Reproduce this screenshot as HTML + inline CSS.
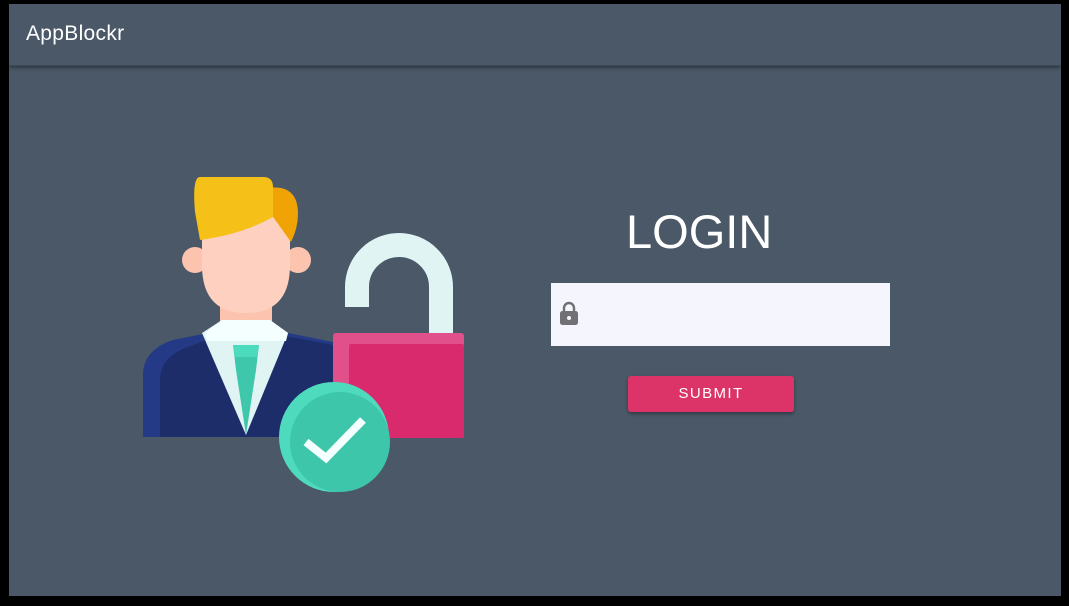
<!DOCTYPE html>
<html><head><meta charset="utf-8"><style>
html,body{margin:0;padding:0;background:#000;width:1069px;height:606px;overflow:hidden;font-family:"Liberation Sans",sans-serif}
#app{position:absolute;left:9px;top:4px;width:1052px;height:592px;background:#4a5867;overflow:hidden}
#hdr{position:absolute;left:0;top:0;width:100%;height:61px;background:#4a5867;box-shadow:0 2px 3px rgba(0,0,0,.35);border-bottom:1px solid #3c4855}
#hdr span{position:absolute;left:17px;top:18px;color:#fff;font-size:21px;letter-spacing:.3px}
#inp{position:absolute;left:542px;top:279px;width:339px;height:63px;background:#f5f5fd}
#btn{position:absolute;left:619px;top:372px;width:166px;height:36px;background:#dc3468;border-radius:3px;box-shadow:0 2px 3px rgba(0,0,0,.35);color:#fff;font-size:15px;letter-spacing:1.4px;text-align:center;line-height:36px}
svg{position:absolute;left:0;top:0}
</style></head><body>
<div id="app">
<div id="hdr"><span>AppBlockr</span></div>
<div style="position:absolute;left:617px;top:200px;color:#fff;font-size:47px;letter-spacing:0">LOGIN</div>
<div id="inp"><svg width="30" height="30" style="left:8px;top:18px" viewBox="0 0 30 30"><path d="M5 10 v-3 a5 5 0 0 1 10 0 v3" fill="none" stroke="#707075" stroke-width="2.4"/><rect x="1" y="10" width="18" height="14" rx="2.5" fill="#707075"/><circle cx="10" cy="17" r="2" fill="#f5f5fd"/></svg></div>
<div id="btn">SUBMIT</div>
<svg width="1052" height="592" viewBox="9 4 1052 592" style="pointer-events:none">
<path d="M357 307 v-20 a42 42 0 0 1 84 0 v50" fill="none" stroke="#e0f4f4" stroke-width="24"/>
<rect x="333" y="333" width="131" height="105" rx="3" fill="#e2508c"/>
<rect x="349" y="344" width="115" height="94" rx="2" fill="#da2a6e"/>
<circle cx="195" cy="260" r="13" fill="#fcc4af"/>
<circle cx="298" cy="260" r="13" fill="#fcc4af"/>
<rect x="220" y="295" width="52" height="45" fill="#fcc4af"/>
<path d="M143 437 V375 q0-25 30-35 l40-8 h70 l50 10 v95 z" fill="#243a86"/>
<path d="M160 437 V380 q0-22 25-32 l35-13 h60 l53 10 v92 z" fill="#1d2d6a"/>
<path d="M202 333 l20-13 h48 l18 13 l-42 102 z" fill="#e0f4f4"/>
<path d="M205 333 l17-13 h48 l18 13 l-2 8 h-79 z" fill="#f4ffff"/>
<path d="M233 345 h26 l-3 25 l-10 65 l-10-65 z" fill="#3ec7aa"/>
<path d="M233 345 h26 l-2 12 h-22 z" fill="#4cdbbd"/>
<path d="M202 205 h88 v60 q0 48 -44 48 q-44 0 -44 -48 z" fill="#fed0c0"/>
<path d="M268 188 q30 -4 30 26 q0 14 -7 28 l-20 -28 z" fill="#efa304"/>
<path d="M200 177 h63 q10 0 10 10 v30 q-30 17 -73 23 l-5 -28 q-3 -35 5 -35 z" fill="#f5c017"/>
<circle cx="334" cy="437" r="55" fill="#4edbbd"/>
<circle cx="340" cy="442" r="50" fill="#3dc6a9"/>
<path d="M306 442 l20 16 l37 -38" fill="none" stroke="#f4ffff" stroke-width="8"/>
</svg>
</div>
</body></html>
